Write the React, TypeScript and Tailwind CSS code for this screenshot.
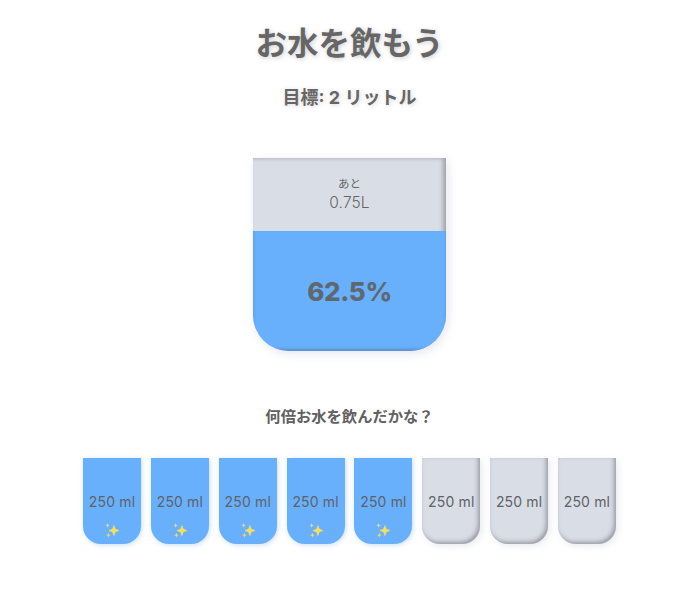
import React from 'react';

const CUPS = [true, true, true, true, true, false, false, false];

function Sparkles() {
  return (
    <svg viewBox="0 0 16 16" className="w-[15px] h-[16px]">
      <path d="M9.5 3.2 10.9 7 14.8 8.6 10.9 10.2 9.5 14 8.1 10.2 4.2 8.6 8.1 7Z" fill="#fbdf58" stroke="#fbdf58" strokeWidth="0.6" strokeLinejoin="round" />
      <path d="M2.8 0.6 3.5 2.4 5.2 3.1 3.5 3.8 2.8 5.6 2.1 3.8 0.4 3.1 2.1 2.4Z" fill="#dcd8a0" />
      <path d="M3.6 11 4.4 12.8 6.2 13.5 4.4 14.2 3.6 16 2.8 14.2 1 13.5 2.8 12.8Z" fill="#f4d85e" />
    </svg>
  );
}

function Cup({ full }: { full: boolean }) {
  return (
    <div
      className={`relative w-[58px] h-[86px] rounded-b-[18px] flex items-center justify-center ${
        full
          ? 'bg-[#68b0fc] shadow-[1px_1px_5px_rgba(120,170,240,0.4)]'
          : 'bg-[#d9dde5] shadow-[inset_-2px_-2px_4px_rgba(90,90,100,0.5),2px_2px_6px_rgba(190,195,210,0.35)]'
      }`}
    >
      <span className="text-[14px] text-[#5f6368] tracking-[0.15px]">250 ml</span>
      {full && (
        <span className="absolute left-[22px] bottom-[6px]">
          <Sparkles />
        </span>
      )}
    </div>
  );
}

export default function App() {
  return (
    <div className="min-h-screen bg-white pr-px flex flex-col items-center font-['Inter','Noto_Sans_CJK_JP',sans-serif] text-[#666]">
      <h1 className="mt-[22px] text-[31.5px] leading-[44px] font-bold [text-shadow:1px_1px_5px_rgba(90,90,90,0.3)]">
        お水を飲もう
      </h1>
      <h3 className="mt-[19px] text-[18px] leading-[26px] font-bold [text-shadow:1px_1px_4px_rgba(90,90,90,0.25)]">
        目標: 2 リットル
      </h3>

      {/* big glass */}
      <div className="mt-[47px] w-[193px] h-[193px] rounded-b-[36px] overflow-hidden flex flex-col bg-[#d9dde5] shadow-[inset_-3px_0_4px_rgba(90,90,100,0.45),2px_3px_10px_rgba(190,195,215,0.4)]">
        <div className="h-[73px] flex flex-col items-center justify-center">
          <span className="text-[11.5px] leading-[17px]">あと</span>
          <span className="text-[15.5px] leading-[20px] font-light tracking-[0.1px]">0.75L</span>
        </div>
        <div className="flex-1 bg-[#68b0fc] flex items-center justify-center shadow-[inset_0_-2px_3px_rgba(60,80,120,0.35)]">
          <span className="text-[26px] font-extrabold tracking-[-0.4px] text-[#5f6870]">62.5%</span>
        </div>
      </div>

      <p className="mt-[55px] text-[15.3px] leading-[22px] font-semibold text-[#606060]">何倍お水を飲んだかな？</p>

      <div className="mt-[30px] flex gap-[9.85px]">
        {CUPS.map((full, i) => (
          <Cup key={i} full={full} />
        ))}
      </div>
    </div>
  );
}
